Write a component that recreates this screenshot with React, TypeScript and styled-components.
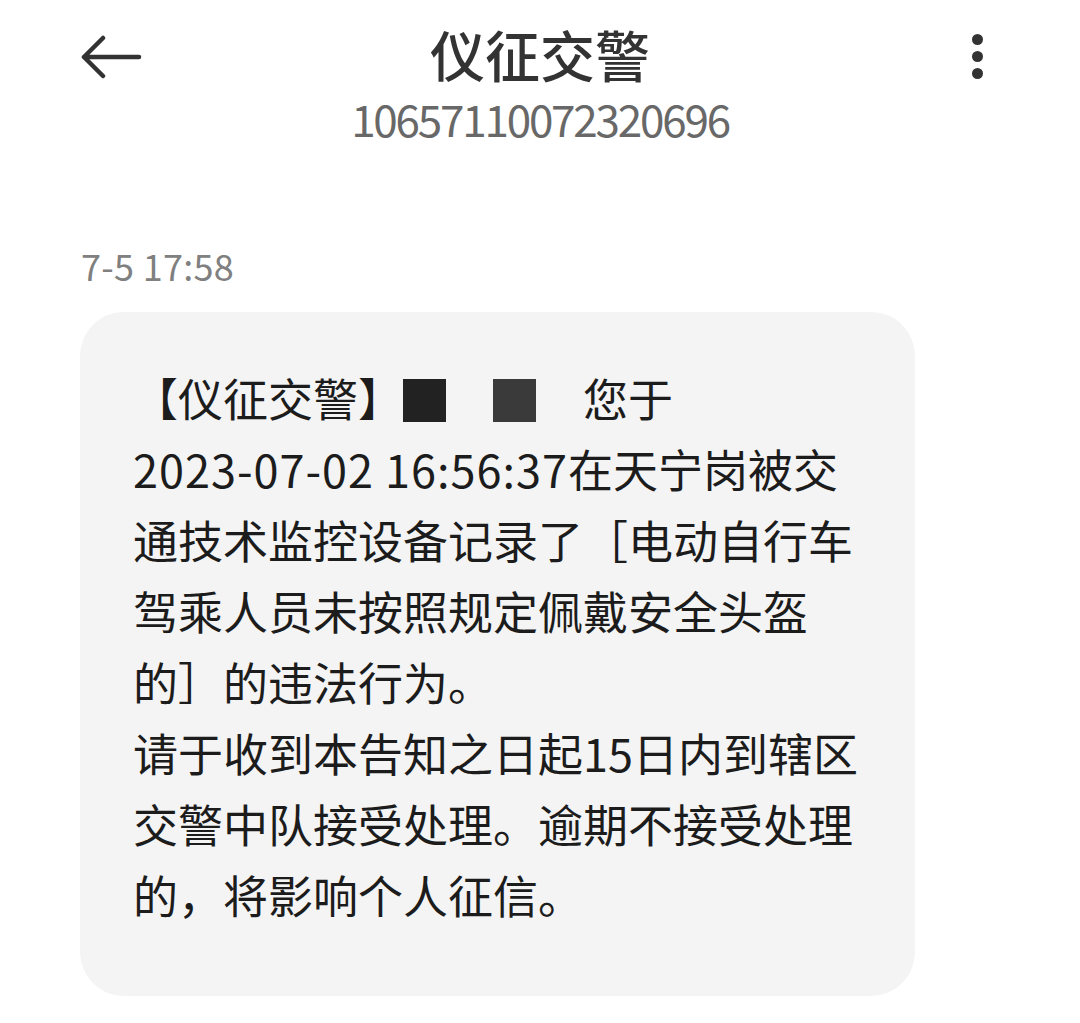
import React, { FC } from 'react'
import styled, { createGlobalStyle } from 'styled-components'

const GlobalStyle = createGlobalStyle`
    html, body {
        margin: 0;
        padding: 0;
        background: #ffffff;
    }
    body {
        font-family: "Noto Sans CJK SC", "Noto Sans", sans-serif;
    }
`

const Page = styled.div`
    width: 1080px;
    min-height: 1023px;
    background: #ffffff;
`

const Header = styled.header`
    display: grid;
    grid-template-columns: 1fr auto 1fr;
    align-items: start;
    padding-top: 21px;
`

const BackButton = styled.div`
    display: flex;
    padding-left: 80px;
    padding-top: 14px;
`

const MoreButton = styled.div`
    display: flex;
    flex-direction: column;
    align-items: center;
    justify-self: end;
    gap: 6px;
    margin-right: 97px;
    padding-top: 13px;
`

const Dot = styled.span`
    width: 11px;
    height: 11px;
    border-radius: 50%;
    background: #333333;
`

const TitleBlock = styled.div`
    display: flex;
    flex-direction: column;
    align-items: center;
    gap: 8px;
`

const Title = styled.h1`
    margin: 0;
    font-size: 55px;
    line-height: 64px;
    font-weight: 500;
    color: #333333;
`

const Number = styled.div`
    font-size: 44px;
    line-height: 50px;
    letter-spacing: -2.2px;
    color: #686868;
    font-weight: 400;
`

const Thread = styled.main`
    display: flex;
    flex-direction: column;
    align-items: flex-start;
    padding: 102px 0 0 80px;
`

const Stamp = styled.div`
    font-size: 36px;
    line-height: 40px;
    color: #808080;
    letter-spacing: 0.3px;
    padding-left: 1px;
`

const Bubble = styled.div`
    box-sizing: border-box;
    width: 835px;
    margin-top: 27px;
    padding: 50px 40px 66px 53px;
    background: #f4f4f4;
    border-radius: 44px;
    font-size: 45px;
    line-height: 71px;
    color: #1c1c1c;
`

const Digits = styled.span`
    letter-spacing: 1px;
`

const Redact = styled.span<{ $shade: string }>`
    display: inline-block;
    width: 43px;
    height: 43px;
    vertical-align: -5px;
    background: ${(p) => p.$shade};
`

const Gap = styled.span`
    display: inline-block;
    width: 47px;
`

const BackArrow: FC = () => (
    <svg width="62" height="44" viewBox="0 0 62 44" fill="none">
        <path
            d="M59 22H4M23 3L4 22L23 41"
            stroke="#333333"
            strokeWidth="4.5"
            strokeLinecap="round"
            strokeLinejoin="round"
        />
    </svg>
)

const App: FC = () => {
    return (
        <Page>
            <GlobalStyle />
            <Header>
                <BackButton>
                    <BackArrow />
                </BackButton>
                <TitleBlock>
                    <Title>仪征交警</Title>
                    <Number>10657110072320696</Number>
                </TitleBlock>
                <MoreButton>
                    <Dot />
                    <Dot />
                    <Dot />
                </MoreButton>
            </Header>
            <Thread>
                <Stamp>7-5 17:58</Stamp>
                <Bubble>
                    【仪征交警】<Redact $shade="#222222" />
                    <Gap />
                    <Redact $shade="#3a3a3a" />
                    <Gap />您于
                    <br />
                    <Digits>2023-07-02 16:56:37</Digits>在天宁岗被交
                    <br />
                    通技术监控设备记录了［电动自行车
                    <br />
                    驾乘人员未按照规定佩戴安全头盔
                    <br />
                    的］的违法行为。
                    <br />
                    请于收到本告知之日起15日内到辖区
                    <br />
                    交警中队接受处理。逾期不接受处理
                    <br />
                    的，将影响个人征信。
                </Bubble>
            </Thread>
        </Page>
    )
}

export default App
